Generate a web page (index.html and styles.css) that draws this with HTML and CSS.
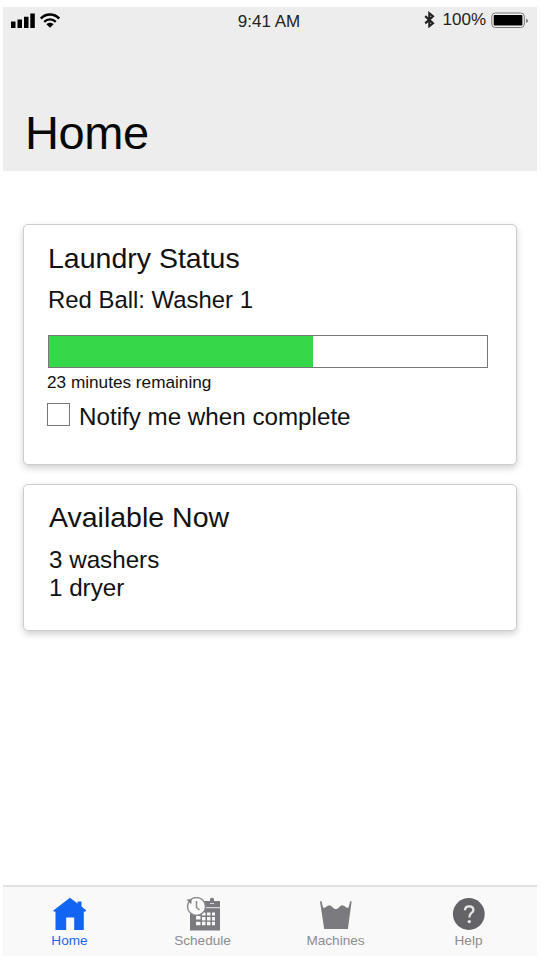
FILE: index.html
```html
<!DOCTYPE html>
<html lang="en">
<head>
<meta charset="utf-8">
<title>Home</title>
<link rel="stylesheet" href="styles.css">
</head>
<body>
<div class="screen">
  <header class="header">
    <div class="status">
      <div class="status-left">
        <svg width="25" height="16" viewBox="0 0 25 16"><path d="M0 8.500h4.500V15H0zM6.500 6.500H11V15H6.500zM13 3.800h4.500V15H13zM19.300.5h4.500V15h-4.500z"/></svg>
        <svg width="20" height="16" viewBox="0 0 20 16"><g fill="none" stroke="#000" stroke-width="2.600"><path d="M.8 5.600C5.800.2 14.200.2 19.200 5.600"/><path d="M4.200 8.900C7.500 5.600 12.500 5.600 15.800 8.900" stroke-width="2.200"/></g><path d="M6.400 11.200c2-2 5.200-2 7.200 0L10 14.700z"/></svg>
      </div>
      <span class="status-time">9:41 AM</span>
      <div class="status-right">
        <svg width="11" height="17" viewBox="0 0 11 17"><path d="M1.200 5.100 9 12.200l-3.700 3V2.300L9 5.300 1.200 12.400" fill="none" stroke="#222" stroke-width="2.100"/></svg>
        <span class="percent">100%</span>
        <svg width="38" height="18" viewBox="0 0 38 18"><rect x=".8" y="2" width="32.500" height="14.500" rx="3.500" fill="#f3f3f3" stroke="#777" stroke-width="1"/><rect x="2.700" y="4" width="28.700" height="10.500" rx="1"/><path d="M35.300 7.400q3 2.300 0 4.600z" fill="#555"/></svg>
      </div>
    </div>
    <h1>Home</h1>
  </header>
  <main class="content">
    <section class="card laundry">
      <h2>Laundry Status</h2>
      <p>Red Ball: Washer 1</p>
      <div class="bar"><div class="bar-fill" style="width:60.200%"></div></div>
      <p class="remaining">23 minutes remaining</p>
      <div class="notify"><span class="box"></span><span>Notify me when complete</span></div>
    </section>
    <section class="card available">
      <h2>Available Now</h2>
      <p>3 washers</p>
      <p>1 dryer</p>
    </section>
  </main>
  <nav class="tabs">
    <a class="tab active">
      <svg width="34" height="34" viewBox="0 0 34 34"><path d="M17 .8 24.500 6.500V4.400h4v5.100L33.300 13.500l-1.200 1.300-1.300-.4V33h-9.600V20.500h-8V33H2.500V14.400l-1.300.4L.3 13.500z"/></svg>
      <span>Home</span>
    </a>
    <a class="tab">
      <svg width="34" height="34" viewBox="0 0 34 34"><path d="M4 4h20V1.800q2-2 4 0V4h6v29.500H4z"/><path d="M20 10.700h14M24 6.500h4" stroke="#d5d5d7" stroke-width="1.200"/><path d="M10 19h4.500v3.600H10zM16 15.500h3.500v3H16zM21 15.500h3.500v3H21zM26 15.500h3v3h-3zM16 20h3.500v3.500H16zM21 20h3.500v3.500H21zM26 20h3v3.500h-3zM10 24.800h4.500v3.500H10zM16 24.800h3.500v3.500H16zM21 24.800h3.500v3.500H21zM26 24.800h3v3.500h-3z" fill="#f8f8f8"/><circle cx="10.500" cy="9.500" r="9" fill="#fafafa" stroke="#8b8b8e" stroke-width="1.400"/><path d="M10.500 4v6.500l3 2.500" fill="none" stroke="#8b8b8e" stroke-width="1.500"/><path d="m.5 2.500 5.200-.2-.5 5z"/></svg>
      <span>Schedule</span>
    </a>
    <a class="tab">
      <svg width="34" height="34" viewBox="0 0 34 34"><path d="m1 4.500 1.500-.4L4 10.500c2.500 1.500 3.800-2.300 6.300-2.300s3.700 3.800 6.500 3.800 4-3.800 6.500-3.800 4 3.800 6.200 2.300l1.800-6.400 1.300.4-3.700 27.500H5.200z"/></svg>
      <span>Machines</span>
    </a>
    <a class="tab">
      <svg width="34" height="34" viewBox="0 0 34 34"><circle cx="16.800" cy="17" r="15.900" fill="#646468"/><path d="M13 13.300q0-4 4.200-4t4.200 3.700q0 2-2.200 3.300-1.900 1.200-1.900 4.200" fill="none" stroke="#e7e7e8" stroke-width="2.300"/><circle cx="17.300" cy="24.600" r="1.700" fill="#e7e7e8"/></svg>
      <span>Help</span>
    </a>
  </nav>
</div>
</body>
</html>
```

FILE: styles.css
```css
* { box-sizing: border-box; }
body {
  margin: 0;
  padding: 7px 5px 6px 3px;
  background: #fff;
  color: #111;
  font-family: "Liberation Sans", Arial, sans-serif;
}
h1, h2, p { margin: 0; font-weight: 400; }
svg { display: block; flex: none; }
.screen { display: flex; flex-direction: column; height: 949px; }
.header { height: 164px; background: #ededed; }
.status {
  display: grid;
  grid-template-columns: 1fr auto 1fr;
  height: 28px;
  padding: 0 8px;
  font-size: 17px;
  line-height: 28px;
  color: #222;
}
.status-time { margin: 1px 1px 0 -1px; }
.status-left { display: flex; gap: 4px; padding-top: 6px; }
.status-right { display: flex; justify-content: flex-end; padding-top: 4px; }
.percent { margin: -5px 5px 0 8px; }
h1 { margin: 70px 0 0 22px; font-size: 47px; letter-spacing: -.4px; line-height: 56px; color: #080808; }
.content {
  display: flex;
  flex: 1;
  flex-direction: column;
  gap: 19px;
  padding: 53px 20px 0;
}
.card {
  padding: 17px 28px 0 24px;
  border: 1px solid #cdcdcd;
  border-radius: 5px;
  background: #fff;
  box-shadow: 0 3px 7px rgba(0, 0, 0, .19);
  font-size: 24.200px;
  line-height: 28px;
}
.laundry { height: 241px; }
.available { height: 147px; padding: 16px 28px 0 25px; }
h2 { margin-bottom: 12px; font-size: 28.500px; line-height: 32px; }
.available h2 { margin-bottom: 13px; }
.laundry p:not(.remaining) { font-size: 23.900px; }
.bar { height: 33px; margin-top: 21px; border: 1px solid #777; }
.bar-fill { height: 100%; background: #36d748; }
.remaining { margin: 4px 0 0 -1px; font-size: 17.200px; line-height: 20px; }
.notify { display: flex; gap: 9px; margin: 11px 0 0 -1px; }
.box { width: 23px; height: 23px; border: 1px solid #777; }
.tabs {
  display: grid;
  grid-template-columns: repeat(4, 133px);
  height: 71px;
  border-top: 2px solid #e3e3e4;
  background: #f9f9f9;
}
.tab {
  display: flex;
  flex-direction: column;
  align-items: center;
  padding-top: 10px;
  color: #8c8c90;
  fill: #7b7b7f;
  font-size: 13.600px;
  line-height: 16px;
}
.tab span { margin-top: 2px; }
.active { color: #1769ee; fill: #1264f3; }
```
